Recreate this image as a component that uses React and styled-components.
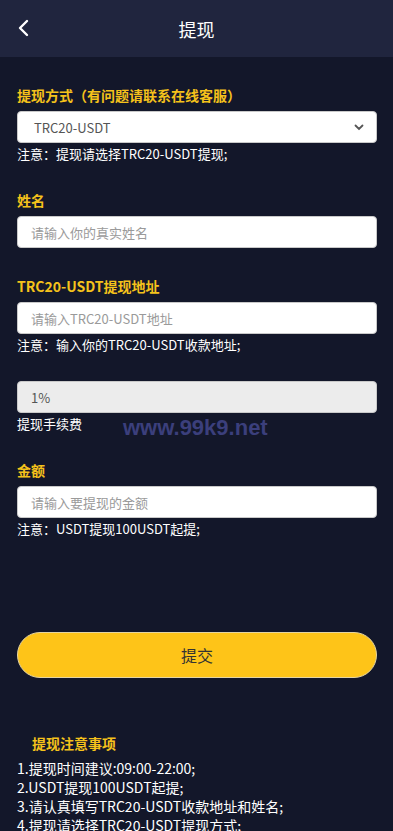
import styled, { createGlobalStyle } from 'styled-components';

const Global = createGlobalStyle`
  body {
    margin: 0;
    background: #13172a;
    font-family: "Microsoft YaHei", "Noto Sans CJK SC", "Liberation Sans", sans-serif;
  }
  * { box-sizing: border-box; }
`;

const Page = styled.div`
  position: relative;
  height: 831px;
  overflow: hidden;
  background: #13172a;
  color: #fff;
`;

const Header = styled.header`
  height: 57px;
  background: #20253e;
  display: flex;
  align-items: center;
  justify-content: center;
  position: relative;
`;

const Back = styled.div`
  position: absolute;
  left: 14px;
  top: 18px;
  width: 18px;
  height: 20px;
  display: flex;
  align-items: center;
  justify-content: center;
`;

const Title = styled.h1`
  margin: 0;
  font-size: 18px;
  font-weight: 400;
  color: #fff;
`;

const Form = styled.div`
  padding: 28px 16px 0 17px;
  display: flex;
  flex-direction: column;
`;

const Group = styled.div`
  display: flex;
  flex-direction: column;
  margin-bottom: ${(p) => p.gap || 0}px;
`;

const Label = styled.div`
  font-size: 14px;
  font-weight: 700;
  color: #f5c21b;
  line-height: 20px;
  margin-bottom: 6px;
`;

const Field = styled.div`
  height: 32px;
  border-radius: 4px;
  background: ${(p) => (p.disabled ? '#ececec' : '#fff')};
  border: 1px solid #c9c9c9;
  display: flex;
  align-items: center;
  padding: ${(p) => (p.select ? '0 12px 0 16px' : '0 0 0 13px')};
  justify-content: space-between;
  font-size: 13px;
  color: ${(p) => (p.placeholder ? '#9a9a9a' : '#555')};
`;

const Note = styled.div`
  font-size: 13px;
  color: #fff;
  line-height: 20px;
  margin-top: 1px;
`;

const Watermark = styled.div`
  position: absolute;
  left: 123px;
  top: 415px;
  font-family: "Liberation Sans", Arial, sans-serif;
  font-weight: 700;
  font-size: 22px;
  color: #3b3f7c;
  pointer-events: none;
`;

const Submit = styled.button`
  margin-top: 93px;
  height: 46px;
  border-radius: 23px;
  background: #fec418;
  border: 1px solid #e6d5a0;
  font-family: inherit;
  font-size: 16px;
  color: #333;
  width: 100%;
`;

const Tips = styled.div`
  padding: 55px 16px 0 17px;
`;

const TipsTitle = styled.div`
  font-size: 14px;
  font-weight: 700;
  color: #f5c21b;
  padding-left: 15px;
  line-height: 20px;
  margin-bottom: 6px;
`;

const Tip = styled.div`
  font-size: 14px;
  line-height: 19px;
  color: #fff;
`;

const Chevron = () => (
  <svg width="12" height="18" viewBox="0 0 12 18" fill="none">
    <path d="M10 2L3 9l7 7" stroke="#fff" strokeWidth="2.4" strokeLinecap="round" strokeLinejoin="round" />
  </svg>
);

const Caret = () => (
  <svg width="10" height="7" viewBox="0 0 10 7" fill="none">
    <path d="M1.5 1.5L5 5l3.5-3.5" stroke="#555" strokeWidth="1.8" strokeLinecap="round" />
  </svg>
);

export default function App() {
  return (
    <Page>
      <Global />
      <Header>
        <Back><Chevron /></Back>
        <Title>提现</Title>
      </Header>
      <Form>
        <Group gap={26}>
          <Label>提现方式（有问题请联系在线客服）</Label>
          <Field select>
            <span>TRC20-USDT</span>
            <Caret />
          </Field>
          <Note>注意：提现请选择TRC20-USDT提现;</Note>
        </Group>
        <Group gap={28}>
          <Label>姓名</Label>
          <Field placeholder>请输入你的真实姓名</Field>
        </Group>
        <Group gap={26}>
          <Label>TRC20-USDT提现地址</Label>
          <Field placeholder>请输入TRC20-USDT地址</Field>
          <Note>注意：输入你的TRC20-USDT收款地址;</Note>
        </Group>
        <Group gap={26}>
          <Field disabled>1%</Field>
          <Note>提现手续费</Note>
        </Group>
        <Group>
          <Label>金额</Label>
          <Field placeholder>请输入要提现的金额</Field>
          <Note>注意：USDT提现100USDT起提;</Note>
        </Group>
        <Submit>提交</Submit>
      </Form>
      <Tips>
        <TipsTitle>提现注意事项</TipsTitle>
        <Tip>1.提现时间建议:09:00-22:00;</Tip>
        <Tip>2.USDT提现100USDT起提;</Tip>
        <Tip>3.请认真填写TRC20-USDT收款地址和姓名;</Tip>
        <Tip>4.提现请选择TRC20-USDT提现方式;</Tip>
      </Tips>
      <Watermark>www.99k9.net</Watermark>
    </Page>
  );
}
